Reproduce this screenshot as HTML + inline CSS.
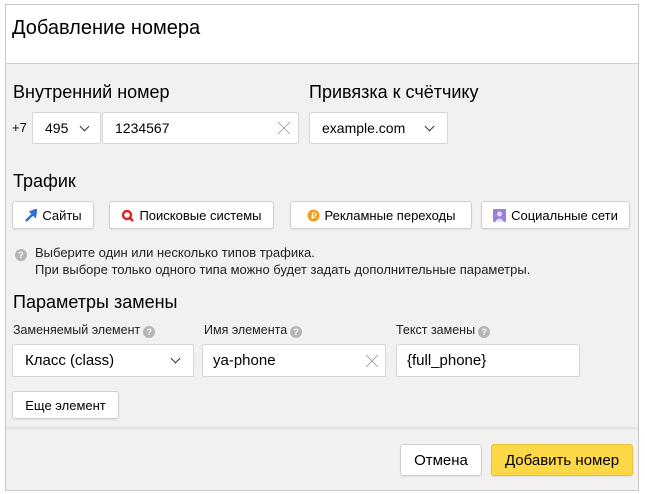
<!DOCTYPE html>
<html><head><meta charset="utf-8"><style>
*{box-sizing:border-box;margin:0;padding:0}
body{width:645px;height:494px;background:#fff;font-family:"Liberation Sans",Arial,sans-serif;color:#000;position:relative;overflow:hidden}
.frame{position:absolute;left:5px;top:4px;width:634px;height:487px;border:1px solid #c8c8c8;background:#f2f1ef}
.head{position:absolute;left:0;top:0;right:0;height:59px;background:#fff;border-bottom:1px solid #d0d0d0}
.a{position:absolute}
.t{font-size:20px;left:6px;top:12px}
.h{font-size:18px}
.box{position:absolute;background:#fff;border:1px solid #d6d6d6;border-radius:2px;font-size:14px;display:flex;align-items:center;padding-left:12px}
.btn{position:absolute;background:#fff;border:1px solid #cfcfcf;border-radius:3px;font-size:13px;display:flex;align-items:center;justify-content:center;box-shadow:0 1px 1px rgba(0,0,0,.08)}
.chev{position:absolute;width:7px;height:7px;border-right:1.3px solid #333;border-bottom:1.3px solid #333;transform:rotate(45deg)}
.x{position:absolute;width:14px;height:14px}
.q{display:inline-block;width:12px;height:12px;border-radius:50%;background:#b5b5b5;color:#fff;font-size:9px;text-align:center;line-height:12px;font-weight:bold;vertical-align:-1px;margin-left:3px}
.sm{font-size:12.5px;color:#222}
.ico{display:inline-block;width:13px;height:13px;margin-right:5px}
</style></head><body>
<div class="frame">
<div class="head"><div class="a t">Добавление номера</div></div>
<div class="a h" style="left:7px;top:77px">Внутренний номер</div>
<div class="a h" style="left:303px;top:77px">Привязка к счётчику</div>
<div class="a" style="left:6px;top:115px;font-size:13px">+7</div>
<div class="box" style="left:26px;top:107px;width:69px;height:32px">495<span class="chev" style="left:48px;top:10px"></span></div>
<div class="box" style="left:96px;top:107px;width:197px;height:32px">1234567<svg class="x" style="left:174px;top:8px" viewBox="0 0 14 14"><path d="M1 1L13 13M13 1L1 13" stroke="#aaa" stroke-width="1"/></svg></div>
<div class="box" style="left:303px;top:107px;width:139px;height:32px">example.com<span class="chev" style="left:116px;top:10px"></span></div>
<div class="a h" style="left:7px;top:166px">Трафик</div>
<div class="btn" style="left:6px;top:196px;width:82px;height:28px"><svg class="ico" viewBox="0 0 13 13"><path d="M2 12 L9 5 L7 3 L12 1 L11 7 L9 5" fill="#2f6fd8" stroke="#2f6fd8" stroke-width="2.5"/></svg>Сайты</div>
<div class="btn" style="left:103px;top:196px;width:165px;height:28px"><svg class="ico" viewBox="0 0 13 13"><circle cx="6" cy="6" r="4" fill="none" stroke="#e02020" stroke-width="2.4"/><path d="M8 8 L12 12" stroke="#e02020" stroke-width="2.6"/></svg>Поисковые системы</div>
<div class="btn" style="left:284px;top:196px;width:182px;height:28px"><svg class="ico" viewBox="0 0 13 13"><circle cx="6.5" cy="6.5" r="6" fill="#f0a020"/><text x="4" y="10" font-size="9" fill="#fff" font-family="Liberation Sans">₽</text></svg>Рекламные переходы</div>
<div class="btn" style="left:475px;top:196px;width:149px;height:28px"><svg class="ico" viewBox="0 0 13 13"><rect width="13" height="13" rx="1" fill="#9b7fd8"/><circle cx="6.5" cy="5" r="2.5" fill="#e8dcff"/><path d="M2 13 Q6.5 6 11 13Z" fill="#e8dcff"/></svg>Социальные сети</div>
<div class="a sm" style="left:9px;top:240px;font-size:13px"><span class="q" style="margin:0 8px 0 0">?</span>Выберите один или несколько типов трафика.</div>
<div class="a sm" style="left:29px;top:257px;font-size:13px">При выборе только одного типа можно будет задать дополнительные параметры.</div>
<div class="a h" style="left:7px;top:287px">Параметры замены</div>
<div class="a sm" style="left:7px;top:318px">Заменяемый элемент<span class="q">?</span></div>
<div class="a sm" style="left:198px;top:318px">Имя элемента<span class="q">?</span></div>
<div class="a sm" style="left:390px;top:318px">Текст замены<span class="q">?</span></div>
<div class="box" style="left:6px;top:339px;width:182px;height:33px;font-size:15px">Класс (class)<span class="chev" style="left:159px;top:10px"></span></div>
<div class="box" style="left:196px;top:339px;width:184px;height:33px;padding-left:10px;font-size:15px">ya-phone<svg class="x" style="left:162px;top:9px" viewBox="0 0 14 14"><path d="M1 1L13 13M13 1L1 13" stroke="#aaa" stroke-width="1"/></svg></div>
<div class="box" style="left:390px;top:339px;width:184px;height:33px;padding-left:10px;font-size:15px">{full_phone}</div>
<div class="btn" style="left:6px;top:386px;width:107px;height:28px">Еще элемент</div>
<div class="a" style="left:0;right:0;top:422px;height:4px;background:linear-gradient(to bottom,rgba(0,0,0,.08),rgba(0,0,0,0))"></div>
<div class="btn" style="left:394px;top:439px;width:82px;height:32px;font-size:15px">Отмена</div>
<div class="btn" style="left:485px;top:439px;width:142px;height:32px;font-size:15px;background:#fcd847;border-color:#e6c13a">Добавить номер</div>
</div>
</body></html>
